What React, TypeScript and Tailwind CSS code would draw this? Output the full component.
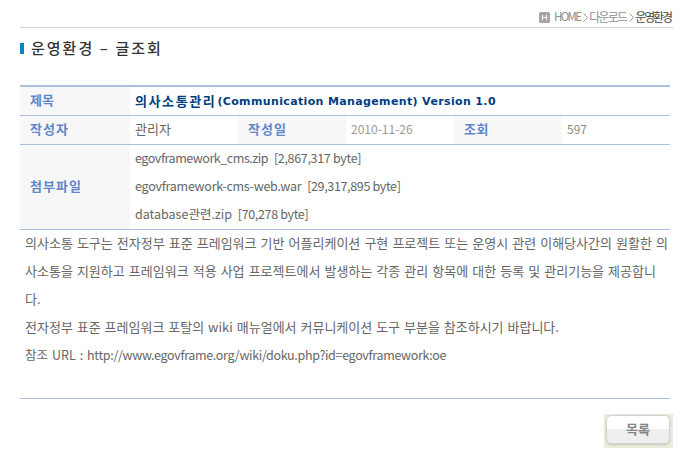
import type { ReactNode } from "react";

function HeaderCell({ children, className = "" }: { children: ReactNode; className?: string }) {
  return (
    <div className={`flex w-[110px] shrink-0 items-center bg-[#f7f7f7] pb-[2px] pl-[10px] text-[13px] font-bold text-[#5f86cb] ${className}`}>
      {children}
    </div>
  );
}

function Breadcrumb() {
  return (
    <nav className="ml-5 flex h-7 w-[653px] items-center justify-end border-b border-[#d0d0d0] pt-[7px] pr-[2px] text-[12px] leading-none text-[#8f8f8f]">
      <svg className="mr-[4px] h-[11px] w-[11px]" viewBox="0 0 11 11">
        <rect width="11" height="11" rx="1.5" fill="#a5a5a5" />
        <path d="M3 3h1v2h3V3h1v5H7V6H4v2H3z" fill="#fff" />
      </svg>
      <span className="text-[11.5px] tracking-[-1.7px]">HOME</span>
      <svg className="mr-px ml-[3px] h-[9px] w-[5px]" viewBox="0 0 5 9">
        <path d="M.5 .5 4.5 4.5 .5 8.5" fill="none" stroke="#999" />
      </svg>
      <span className="tracking-[-1.8px]">다운로드</span>
      <svg className="mr-px ml-[3px] h-[9px] w-[5px]" viewBox="0 0 5 9">
        <path d="M.5 .5 4.5 4.5 .5 8.5" fill="none" stroke="#999" />
      </svg>
      <span className="tracking-[-2.1px] text-[#444]">운영환경</span>
    </nav>
  );
}

export default function App() {
  return (
    <main className="h-[458px] w-[687px] bg-white font-['Noto_Sans_CJK_KR',sans-serif] text-[13px] text-[#666]">
      <Breadcrumb />
      <h1 className="ml-5 flex h-[39px] items-center pb-px text-[15px] leading-none font-medium tracking-[2px] text-[#333]">
        <span className="mt-[2px] mr-[7px] h-[11px] w-1 bg-[#0a82c0]" />
        <span className="[word-spacing:0.2px]">운영환경 – 글조회</span>
      </h1>
      <section className="mt-[18px] ml-5 w-[650px] border-t-2 border-[#a9c1dd]">
        <div className="flex h-[29px] border-b border-[#a9c1dd]">
          <HeaderCell>제목</HeaderCell>
          <div className="flex items-center pl-[5px] font-bold whitespace-nowrap text-[#003e80]">
            <span className="tracking-[1.6px]">의사소통관리</span>
            <span className="mt-[2px] ml-px font-['DejaVu_Sans',sans-serif] text-[11px] tracking-[0.36px]">(Communication Management) Version 1.0</span>
          </div>
        </div>
        <div className="flex h-[29px] border-b border-[#a9c1dd]">
          <HeaderCell className="tracking-[1px]">작성자</HeaderCell>
          <div className="flex w-[108px] items-center pb-[2px] pl-[5px]">관리자</div>
          <HeaderCell className="w-[108px]! tracking-[1px]">작성일</HeaderCell>
          <div className="flex w-[108px] items-center pb-[2px] pl-[5px] text-[12px] text-[#999]">2010-11-26</div>
          <HeaderCell className="w-[108px]! tracking-[0.5px]">조회</HeaderCell>
          <div className="flex items-center pb-[2px] pl-[5px] text-[12px] text-[#888]">597</div>
        </div>
        <div className="flex h-[85px] border-b border-[#a9c1dd]">
          <HeaderCell className="tracking-[1px]">첨부파일</HeaderCell>
          <ul className="-mt-px pl-[5px] text-[12.5px] leading-[28px] whitespace-nowrap">
            <li>
              <span className="mr-[3px] tracking-[-0.45px]">egovframework_cms.zip</span>{" "}
              <span className="tracking-[-0.32px]">[2,867,317 byte]</span>
            </li>
            <li>
              <span className="mr-[3px] tracking-[-0.25px]">egovframework-cms-web.war</span>{" "}
              <span className="tracking-[-0.35px]">[29,317,895 byte]</span>
            </li>
            <li>
              <span className="mr-[3px]">database관련.zip</span>{" "}
              <span className="tracking-[-0.35px]">[70,278 byte]</span>
            </li>
          </ul>
        </div>
        <div className="flow-root h-[169px] border-b border-[#afc3dc] pl-[5px] leading-[28px] [word-spacing:1.15px] whitespace-nowrap">
          <div className="-mt-px">
            <p>의사소통 도구는 전자정부 표준 프레임워크 기반 어플리케이션 구현 프로젝트 또는 운영시 관련 이해당사간의 원활한 의</p>
            <p>사소통을 지원하고 프레임워크 적용 사업 프로젝트에서 발생하는 각종 관리 항목에 대한 등록 및 관리기능을 제공합니</p>
            <p>다.</p>
            <p className="[word-spacing:1px]">전자정부 표준 프레임워크 포탈의 wiki 매뉴얼에서 커뮤니케이션 도구 부분을 참조하시기 바랍니다.</p>
            <p className="text-[12.5px]">
              참조 URL : <span className="tracking-[-0.33px]">http://www.egovframe.org/wiki/doku.php?id=egovframework:oe</span>
            </p>
          </div>
        </div>
      </section>
      <div className="mt-[15px] ml-[604px] h-[34px] w-[69px] bg-[#e9eddc] pt-px pl-[2px]">
        <button className="flex h-[29px] w-[64px] items-center justify-center rounded-[5px] border border-[#d2d2d2] bg-linear-to-b from-white from-50% to-[#efefef] to-50% pb-px text-[13px] font-bold text-[#858585] shadow-[0_1px_2px_#c4c7b8]">
          목록
        </button>
      </div>
    </main>
  );
}
